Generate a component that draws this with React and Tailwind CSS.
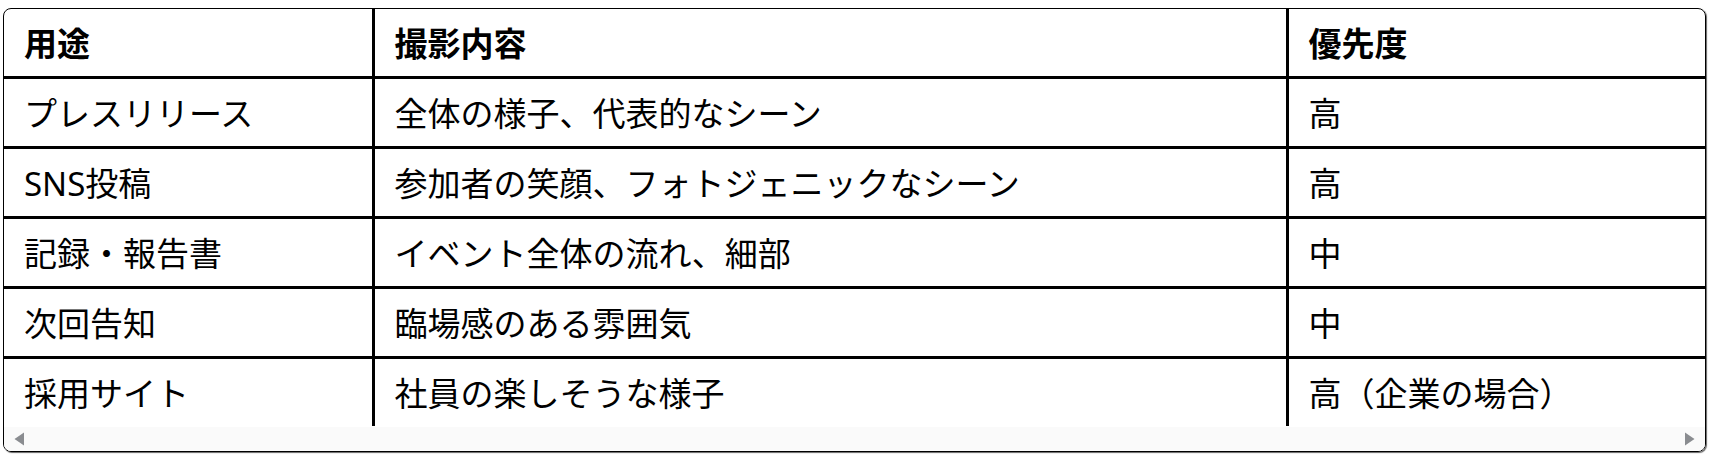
import React from "react";

const rows = [
  ["プレスリリース", "全体の様子、代表的なシーン", "高"],
  ["SNS投稿", "参加者の笑顔、フォトジェニックなシーン", "高"],
  ["記録・報告書", "イベント全体の流れ、細部", "中"],
  ["次回告知", "臨場感のある雰囲気", "中"],
  ["採用サイト", "社員の楽しそうな様子", "高（企業の場合）"],
];

const App = () => {
  return (
    <div className="w-[1713px] h-[458px] bg-white pt-[8px] pl-[3px] font-['Noto_Sans','Noto_Sans_CJK_JP',sans-serif] text-black">
      <div className="w-[1703px] h-[444px] flex flex-col rounded-lg border border-black shadow-[1px_1px_1px_rgba(0,0,0,0.6)] overflow-hidden">
        <div className="h-[418px] overflow-hidden">
          <table className="w-full table-fixed border-collapse border-hidden text-[33px] leading-[47px]">
            <colgroup>
              <col className="w-[369px]" />
              <col className="w-[914px]" />
              <col />
            </colgroup>
            <thead>
              <tr>
                <th className="border-[3px] border-black px-5 pt-[11px] pb-[9px] text-left font-bold">用途</th>
                <th className="border-[3px] border-black px-5 pt-[11px] pb-[9px] text-left font-bold">撮影内容</th>
                <th className="border-[3px] border-black px-5 pt-[11px] pb-[9px] text-left font-bold">優先度</th>
              </tr>
            </thead>
            <tbody>
              {rows.map((r) => (
                <tr key={r[0]}>
                  {r.map((c, i) => (
                    <td key={i} className="border-[3px] border-black px-5 pt-[11px] pb-[9px] whitespace-nowrap">
                      {c}
                    </td>
                  ))}
                </tr>
              ))}
            </tbody>
          </table>
        </div>
        <div className="h-[24px] bg-[#fafafa] flex items-center justify-between px-[9px]">
          <svg width="12" height="14" viewBox="0 0 12 14">
            <path d="M11 0.5 L1.5 7 L11 13.5 Z" fill="#8a8c90" />
          </svg>
          <svg width="12" height="14" viewBox="0 0 12 14">
            <path d="M1 0.5 L10.5 7 L1 13.5 Z" fill="#8a8c90" />
          </svg>
        </div>
      </div>
    </div>
  );
};

export default App;
